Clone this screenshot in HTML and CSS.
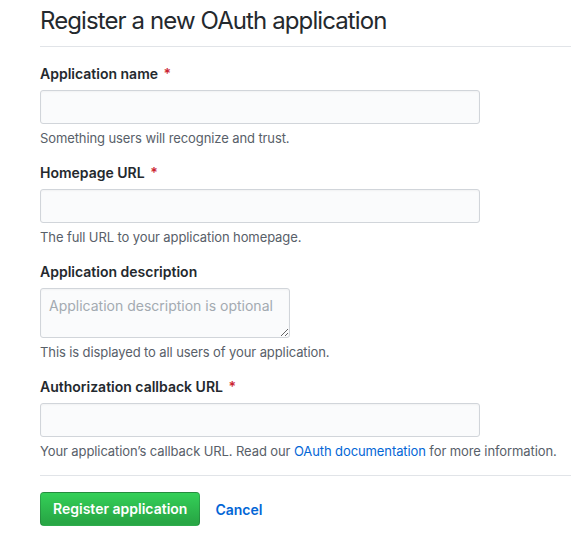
FILE: index.html
```html
<!DOCTYPE html>
<html>
<head>
<meta charset="utf-8">
<link rel="stylesheet" href="styles.css">
</head>
<body>
<div class="page">
  <div class="subhead">
    <h2 class="subhead-heading">Register a new OAuth application</h2>
  </div>
  <form class="form">
    <div class="form-group">
      <label class="label">Application name <span class="req">*</span></label>
      <input class="form-control" type="text">
      <p class="note">Something users will recognize and trust.</p>
    </div>
    <div class="form-group">
      <label class="label">Homepage URL <span class="req">*</span></label>
      <input class="form-control" type="text">
      <p class="note">The full URL to your application homepage.</p>
    </div>
    <div class="form-group">
      <label class="label">Application description</label>
      <textarea class="form-control textarea" placeholder="Application description is optional"></textarea>
      <p class="note">This is displayed to all users of your application.</p>
    </div>
    <div class="form-group">
      <label class="label">Authorization callback URL <span class="req">*</span></label>
      <input class="form-control" type="text">
      <p class="note">Your application’s callback URL. Read our <a class="link" href="#">OAuth documentation</a> for more information.</p>
    </div>
    <div class="form-actions">
      <button class="btn-primary" type="button">Register application</button>
      <a class="btn-link" href="#">Cancel</a>
    </div>
  </form>
</div>
</body>
</html>
```
FILE: styles.css
```css
* { box-sizing: border-box; }
html, body { margin: 0; padding: 0; background: #fff; }
body {
  font-family: Inter, "Noto Sans", "Liberation Sans", sans-serif;
  color: #24292e;
  font-size: 14px;
  line-height: 1.5;
}
.page {
  padding-left: 40px;
}
.subhead {
  padding-top: 6px;
  padding-bottom: 10px;
  border-bottom: 1px solid #e1e4e8;
}
.subhead-heading {
  margin: 0;
  font-size: 24px;
  font-weight: 400;
  line-height: 30px;
  letter-spacing: -0.9px;
  color: #24292e;
}
.form {
  padding-top: 16px;
}
.form-group {
  display: flex;
  flex-direction: column;
  align-items: flex-start;
  margin-bottom: 15px;
}
.label {
  font-weight: 600;
  font-size: 14px;
  line-height: 21px;
  margin-bottom: 6px;
}
.req {
  color: #cb2431;
  margin-left: 2px;
}
.form-control {
  width: 440px;
  height: 34px;
  padding: 6px 8px;
  font-family: inherit;
  font-size: 14px;
  line-height: 20px;
  color: #24292e;
  background: #fafbfc;
  border: 1px solid #d1d5da;
  border-radius: 3px;
  outline: none;
  box-shadow: inset 0 1px 2px rgba(27,31,35,0.04);
}
.textarea {
  width: 250px;
  height: 50px;
  padding-top: 7px;
  resize: both;
  display: block;
}
.textarea::placeholder { color: #a3aab1; }
.note {
  margin: 5px 0 0;
  font-size: 13px;
  line-height: 18px;
  letter-spacing: -0.1px;
  color: #586069;
}
.link {
  color: #0366d6;
  text-decoration: none;
}
.form-actions {
  border-top: 1px solid #e1e4e8;
  padding-top: 16px;
  display: flex;
  align-items: center;
  gap: 15px;
}
.btn-primary {
  height: 34px;
  padding: 6px 12px;
  font-family: inherit;
  font-size: 14px;
  font-weight: 600;
  line-height: 20px;
  color: #fff;
  background: linear-gradient(180deg, #34d058, #28a745 90%);
  border: 1px solid rgba(27,31,35,0.2);
  border-radius: 4px;
  cursor: pointer;
}
.btn-link {
  font-size: 14px;
  font-weight: 600;
  color: #0366d6;
  text-decoration: none;
}
```
